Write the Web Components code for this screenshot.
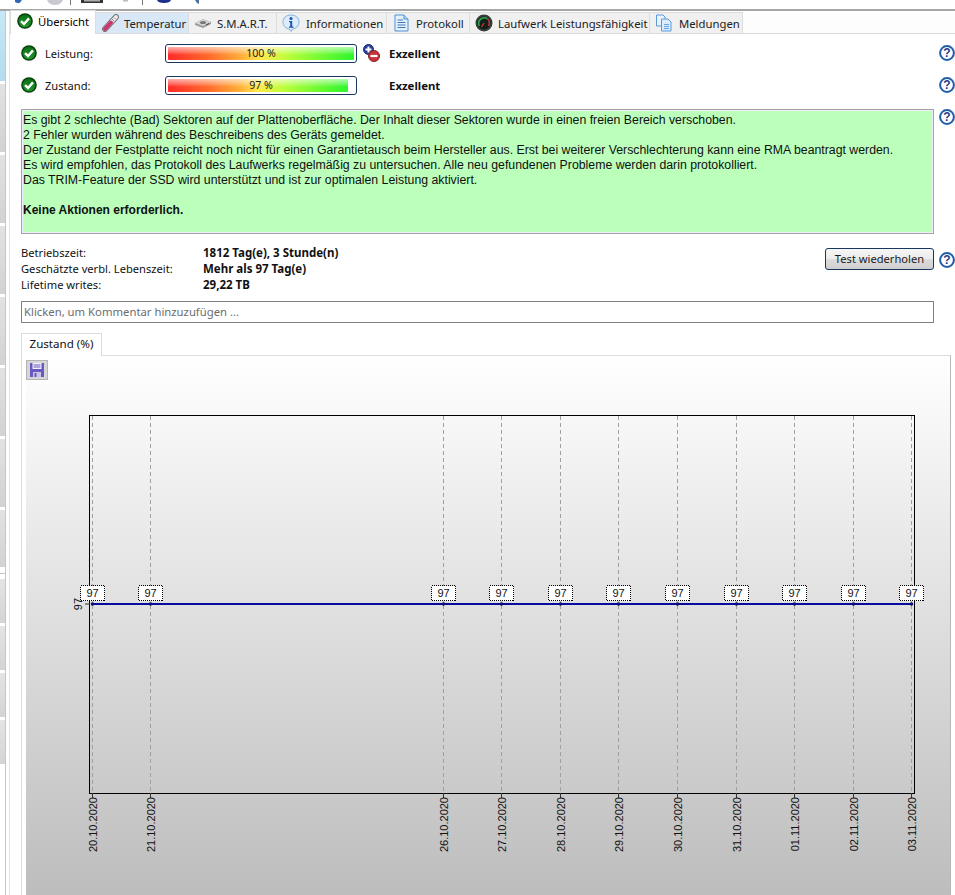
<!DOCTYPE html>
<html lang="de">
<head>
<meta charset="utf-8">
<title>Übersicht</title>
<style>
  html, body { margin: 0; height: 895px; overflow: hidden; background: #fff; }
  body { font: 11.15px "Noto Sans", sans-serif; color: #111; }
</style>
</head>
<body>
<hd-app></hd-app>
<script>
const ICONS = {
  check: `<svg viewBox="0 0 16 16" width="16" height="16"><defs><linearGradient id="g" x1="0" y1="0" x2="0" y2="1"><stop offset="0" stop-color="#0e6e18"/><stop offset="1" stop-color="#1f9a2a"/></linearGradient></defs><circle cx="8" cy="8" r="7.800" fill="#07420c"/><circle cx="8" cy="8" r="6.300" fill="url(#g)"/><path d="M4 8.200 7 11 12 5.400" fill="none" stroke="#fff" stroke-width="2.400"/></svg>`,
  thermo: `<svg viewBox="0 0 18 18" width="18" height="18"><path d="M4 15 15 3" stroke="#777" stroke-width="6" stroke-linecap="round"/><path d="M4 15 15 3" stroke="#eee" stroke-width="4" stroke-linecap="round"/><path d="M4 15 10 8.5" stroke="#c8356f" stroke-width="4" stroke-linecap="round"/><path d="M11 5 13 7M13 3.5 14.500 5" stroke="#888"/></svg>`,
  disk: `<svg viewBox="0 0 18 12" width="18" height="12"><path d="M1 6 9 2 17 5 17 7 9 11 1 8Z" fill="#9a9a9a"/><path d="M1 6 9 2 17 5 9 9Z" fill="#d4d4d4"/><ellipse cx="9" cy="5.500" rx="3" ry="1.500" fill="#777"/><path d="M12 8 15 6.500" stroke="#444"/></svg>`,
  info: `<svg viewBox="0 0 18 18" width="18" height="18"><path d="M9 1C4 1 1 4 1 8s3 6.500 6 7l2 2.500 1.500-2.500C14 14.500 17 12 17 8s-3-7-8-7Z" fill="#dcecfb" stroke="#7fb0e0"/><circle cx="9" cy="4.500" r="1.600" fill="#1d55b5"/><path d="M7 7h3.200v5.500H11.500v1.200H7v-1.200h1.200V8.200H7Z" fill="#1d55b5"/></svg>`,
  doc: `<svg viewBox="0 0 16 18" width="16" height="18"><path d="M2 1H11L15 5V17H2Z" fill="#e4f0fc" stroke="#4b93d8"/><path d="M11 1V5H15" fill="#bcd9f5" stroke="#4b93d8"/><path d="M4.500 6H10M4.500 8.500H12.500M4.500 11H12.500M4.500 13.500H12.500" stroke="#3c78c0"/></svg>`,
  gauge: `<svg viewBox="0 0 18 18" width="18" height="18"><circle cx="9" cy="9" r="8.500" fill="#3b3b3b"/><circle cx="9" cy="9" r="6.500" fill="#10201a"/><path d="M4.500 12A5.500 5.500 0 0 1 12 4.500" fill="none" stroke="#2fae4f" stroke-width="1.500"/><path d="M12 4.500A5.500 5.500 0 0 1 13.500 12" fill="none" stroke="#c33" stroke-width="1.500"/><path d="M9 9 6.500 13" stroke="#e33" stroke-width="1.200"/></svg>`,
  docs: `<svg viewBox="0 0 18 18" width="18" height="18"><path d="M1.500 1H8L10 3V12H1.500Z" fill="#eaf3fc" stroke="#5a9bdc"/><path d="M6.500 5H13L16 8V17H6.500Z" fill="#dcebfa" stroke="#5a9bdc"/><path d="M9 10.500H14M9 12.500H14M9 14.500H14" stroke="#66a3e0"/></svg>`,
  plusminus: `<svg viewBox="0 0 17 18" width="17" height="18"><circle cx="5.500" cy="5.500" r="5" fill="#2a3f9c" stroke="#1b2a70"/><path d="M2.500 5.500H8.500M5.500 2.500V8.500" stroke="#fff" stroke-width="2"/><circle cx="11" cy="12" r="5.500" fill="#c8323a" stroke="#8d1f26"/><path d="M7.500 12H14.500" stroke="#fff" stroke-width="2.200"/></svg>`,
  help: `<svg viewBox="0 0 16 16" width="16" height="16"><circle cx="8" cy="8" r="6.900" fill="#fff" stroke="#1f5fa8" stroke-width="2"/><text x="8" y="12.300" text-anchor="middle" font-family="Liberation Sans, sans-serif" font-weight="700" font-size="12" fill="#1b3f8c">?</text></svg>`,
  save: `<svg viewBox="0 0 14 14" width="14" height="14"><path d="M0 0H14V14H0Z" fill="#6a58c0"/><path d="M2.500 0H11.500V6H2.500Z" fill="#f2f0fa"/><path d="M3.500 2H10.500M3.500 4H10.500" stroke="#6a58c0"/><path d="M3 9H11V14H3Z" fill="#c9c4e8"/><path d="M4.500 10H6.500V14H4.500Z" fill="#6a58c0"/></svg>`
};

class HdIcon extends HTMLElement {
  connectedCallback() {
    if (!this.shadowRoot) this.attachShadow({ mode: "open" });
    this.shadowRoot.innerHTML = `
      <style>:host { display: inline-flex; align-items: center; justify-content: center; flex: none; } svg { display: block; }</style>
      ${ICONS[this.getAttribute("name")] || ""}`;
  }
}

// oben abgeschnittene Werkzeugleiste
class HdToolbar extends HTMLElement {
  constructor() {
    super();
    this.attachShadow({ mode: "open" });
    this.shadowRoot.innerHTML = `
      <style>
        :host { display: block; height: 9px; border-bottom: 2px solid #a6a6a6; background: #fff; overflow: hidden; }
        svg { display: block; }
      </style>
      <svg width="955" height="9" viewBox="0 0 955 9">
        <path d="M15 0H22L20 2.500Q18 4 15 2Z" fill="#2f66b4"/>
        <path d="M47 0H63Q61 5 55 5Q49 5 47 0Z" fill="#c9c9d2"/>
        <path d="M70.500 0V5M142.500 0V5" stroke="#777"/>
        <path d="M81 0H103V3H81Z" fill="#333"/><path d="M84 0H100V1.500H84Z" fill="#aaa"/>
        <path d="M123 0H128V1.500H123Z" fill="#bbb"/>
        <path d="M157 0H171Q170 3 164 3Q158 3 157 0Z" fill="#1c2f8c"/>
        <path d="M195 0H199V4L197 3Z" fill="#4a6f9c"/>
      </svg>`;
  }
}

class HdSideStrip extends HTMLElement {
  constructor() {
    super();
    this.attachShadow({ mode: "open" });
    this.shadowRoot.innerHTML = `
      <style>
        :host { display: flex; flex-direction: column; width: 10px; box-sizing: border-box; border-right: 1px solid #e2e2e2; height: 884px; flex: none; }
        .bar { width: 6px; box-sizing: border-box; border-right: 1px solid #c6c6c6; height: 100%; display: flex; flex-direction: column; gap: 3px; }
        .b { height: 68px; background: linear-gradient(#e2e2e2, #d2d2d2); }
        .b.on { height: 70px; background: linear-gradient(#c6e8f6, #b4dcec); }
        .s { height: 44px; background: linear-gradient(#e4e4e4, #d4d4d4); }
        .line { border-top: 1px solid #c6c6c6; margin-top: 3px; height: 2px; }
      </style>
      <div class="bar">
        <div class="b on"></div>
        <div class="b"></div>
        <div class="b"></div>
        <div class="b"></div>
        <div class="b"></div>
        <div class="b"></div>
        <div class="b"></div>
        <div class="b" style="height:57px"></div>
        <div class="line"></div>
        <div class="s"></div>
        <div class="s"></div>
        <div class="s"></div>
        <div class="s"></div>
      </div>`;
  }
}

class HdTabs extends HTMLElement {
  constructor() {
    super();
    this.attachShadow({ mode: "open" });
    this.shadowRoot.innerHTML = `
      <style>
        :host { display: flex; height: 23px; box-sizing: border-box; background: #fdfdfd; border-bottom: 1px solid #d9d9d9; align-items: flex-end; }
      </style>
      <slot></slot>`;
  }
}

class HdTab extends HTMLElement {
  constructor() {
    super();
    this.attachShadow({ mode: "open" });
    this.shadowRoot.innerHTML = `
      <style>
        :host { display: flex; align-items: center; gap: 5px; box-sizing: border-box; height: 22px; margin-bottom: -1px; padding: 0 0 0 5px; font-size: 11.3px;
                background: #f0f0f0; border: 1px solid #dcdcdc; border-left: 0; color: #222; white-space: nowrap; overflow: hidden; }
        :host([active]) { background: #fff; height: 24px; border-left: 1px solid #dcdcdc; border-bottom: 0; color: #000; margin-top: -2px; padding-bottom: 3px; padding-left: 6px; }
        :host([hover]) { background: #d9e8f6; }
      </style>
      <hd-icon name="${this.getAttribute("icon")}"></hd-icon><slot></slot>`;
    this.style.width = this.getAttribute("w") + "px";
    if (this.hasAttribute("pad")) this.style.paddingLeft = this.getAttribute("pad") + "px";
    if (this.hasAttribute("gap")) this.style.gap = this.getAttribute("gap") + "px";
  }
}

class HdBar extends HTMLElement {
  constructor() {
    super();
    this.attachShadow({ mode: "open" });
    const value = Number(this.getAttribute("value"));
    this.shadowRoot.innerHTML = `
      <style>
        :host { display: block; position: relative; width: 192px; height: 19px; box-sizing: border-box; border: 1px solid #17375e; border-radius: 3px; background: #fff; padding: 2px; }
        .fill { height: 100%; border-radius: 1px;
          background:
            linear-gradient(rgba(255,255,255,.62), rgba(255,255,255,.2) 45%, rgba(255,255,255,0) 60%),
            linear-gradient(90deg, #ff2a2a, #ff6a2a 22%, #ffb03a 40%, #ffe94a 50%, #b8ff3a 65%, #2cf52c 100%); }
        span { position: absolute; inset: 0; display: flex; align-items: center; justify-content: center; font-size: 10.6px; color: #222; }
      </style>
      <div class="fill" style="width:${value === 100 ? 100 : 96.8}%"></div>
      <span>${value} %</span>`;
  }
}

class HdStatus extends HTMLElement {
  constructor() {
    super();
    this.attachShadow({ mode: "open" });
    const trend = this.hasAttribute("trend") ? `<hd-icon name="plusminus"></hd-icon>` : "";
    this.shadowRoot.innerHTML = `
      <style>
        :host { display: grid; grid-template-columns: 16px 128px 192px 32px 1fr 16px; align-items: center; height: 32px; }
        .label { padding-left: 8px; }
        .trend { padding-left: 6px; display: flex; }
        .result { font-weight: 700; font-size: 11.4px; }
      </style>
      <hd-icon name="check"></hd-icon>
      <div class="label">${this.getAttribute("label")}</div>
      <hd-bar value="${this.getAttribute("value")}"></hd-bar>
      <div class="trend">${trend}</div>
      <div class="result"><slot></slot></div>
      <hd-icon name="help"></hd-icon>`;
  }
}

class HdMessage extends HTMLElement {
  constructor() {
    super();
    this.attachShadow({ mode: "open" });
    this.shadowRoot.innerHTML = `
      <style>
        :host { display: grid; grid-template-columns: 913px 16px; column-gap: 5px; align-items: start; margin-top: 8px; }
        .box { box-sizing: border-box; height: 125px; padding: 3px 1px; background: #bbffbb; border: 1px solid #a3a3a3; box-shadow: inset 0 0 0 1px #eef;
               font: 12.3px/15px "Liberation Sans", Arial, sans-serif; color: #101010; white-space: pre-line; }
        ::slotted(b) { font-size: 12px; }
      </style>
      <div class="box"><slot></slot></div>
      <hd-icon name="help"></hd-icon>`;
  }
}

class HdStats extends HTMLElement {
  constructor() {
    super();
    this.attachShadow({ mode: "open" });
    this.shadowRoot.innerHTML = `
      <style>
        :host { display: grid; grid-template-columns: 182px 622px 109px 21px; margin-top: 11px; height: 48px; line-height: 16px; }
        .k { grid-column: 1; }
        .v { grid-column: 2; font-weight: 700; font-size: 11.5px; }
        button { grid-column: 3; grid-row: 1 / span 2; margin-top: 3px; height: 22px; width: 109px; padding: 0; font: inherit; color: #1a1a1a; border: 1px solid #17375e; border-radius: 3px;
                 background: linear-gradient(#f6f6f6, #ececec 48%, #dcdcdc 52%, #cfcfcf); }
        hd-icon { grid-column: 4; grid-row: 1 / span 2; align-self: start; justify-self: end; margin-top: 7px; }
      </style>
      <div class="k">Betriebszeit:</div><div class="v">1812 Tag(e), 3 Stunde(n)</div>
      <div class="k">Geschätzte verbl. Lebenszeit:</div><div class="v">Mehr als 97 Tag(e)</div>
      <div class="k">Lifetime writes:</div><div class="v">29,22 TB</div>
      <button>Test wiederholen</button>
      <hd-icon name="help"></hd-icon>`;
  }
}

class HdComment extends HTMLElement {
  constructor() {
    super();
    this.attachShadow({ mode: "open" });
    this.shadowRoot.innerHTML = `
      <style>
        :host { display: flex; align-items: center; box-sizing: border-box; width: 913px; height: 22px; margin-top: 8px; padding: 0 0 2px 2px; border: 1px solid #808080; color: #6d6d6d; font-size: 11.3px; }
      </style>
      <slot></slot>`;
  }
}

class HdChart extends HTMLElement {
  constructor() {
    super();
    this.attachShadow({ mode: "open" });
    const points = [
      [92.5, "20.10.2020"], [150.5, "21.10.2020"], [443.5, "26.10.2020"], [501.5, "27.10.2020"],
      [560.5, "28.10.2020"], [618.5, "29.10.2020"], [677.5, "30.10.2020"], [736.5, "31.10.2020"],
      [794.5, "01.11.2020"], [853.5, "02.11.2020"], [911.5, "03.11.2020"]
    ];
    const lineY = 604;
    const font = `font-family="Liberation Sans, Arial, sans-serif" font-size="11"`;
    const marks = points.map(([x, date]) => `
      <path d="M${x} 416V793" stroke="#a0a0a0" stroke-dasharray="4 3"/>
      <path d="M${x} 793V798" stroke="#333"/>
      <text transform="translate(${x + 4} 797) rotate(-90)" text-anchor="end" ${font} fill="#111">${date}</text>`).join("");
    const labels = points.map(([x]) => `
      <circle cx="${x}" cy="${lineY}" r="1.800" fill="#10106a"/>
      <rect x="${x - 12}" y="585.500" width="24" height="15" fill="#fff" stroke="#000" stroke-dasharray="1 1" shape-rendering="crispEdges"/>
      <text x="${x}" y="597" text-anchor="middle" ${font} fill="#111">97</text>`).join("");
    this.shadowRoot.innerHTML = `
      <style>
        :host { display: block; position: relative; height: 539px; background: linear-gradient(#fff, #bdbdbd); }
        svg { display: block; }
        .save { position: absolute; left: 0; top: 4px; width: 22px; height: 20px; box-sizing: border-box; display: flex; align-items: center; justify-content: center; background: #d6d6d6; border: 1px solid #b4b4b4; }
      </style>
      <svg width="924" height="539" viewBox="26 356 924 539">
        <rect x="89.500" y="415.500" width="825" height="378" fill="none" stroke="#000"/>
        ${marks}
        <path d="M85 ${lineY}H90" stroke="#333"/>
        <text transform="translate(82 ${lineY}) rotate(-90)" text-anchor="middle" ${font} fill="#111">97</text>
        <path d="M92 ${lineY}H911.500" stroke="#0a0aa0" stroke-width="2"/>
        ${labels}
      </svg>
      <div class="save"><hd-icon name="save"></hd-icon></div>`;
  }
}

class HdChartPane extends HTMLElement {
  constructor() {
    super();
    this.attachShadow({ mode: "open" });
    this.shadowRoot.innerHTML = `
      <style>
        :host { display: block; margin-top: 10px; width: 930px; }
        .tab { box-sizing: border-box; width: 81px; height: 23px; margin-bottom: -1px; padding-bottom: 3px; position: relative; z-index: 1; display: flex; align-items: center; justify-content: center; background: #fff; border: 1px solid #dcdcdc; border-bottom: 0; font-size: 11.6px; }
        .pane { border: 1px solid #dcdcdc; border-width: 1px 1px 0 1px; padding-left: 4px; border-right-color: #b8b8b8; }
      </style>
      <div class="tab"><slot></slot></div>
      <div class="pane"><hd-chart></hd-chart></div>`;
  }
}

class HdApp extends HTMLElement {
  constructor() {
    super();
    this.attachShadow({ mode: "open" });
    this.shadowRoot.innerHTML = `
      <style>
        :host { display: block; height: 895px; overflow: hidden; }
        .body { display: flex; }
        .main { flex: 1; min-width: 0; }
        .content { padding: 3px 0 0 11px; }
        hd-tab { flex: none; }
      </style>
      <hd-toolbar></hd-toolbar>
      <div class="body">
        <hd-side-strip></hd-side-strip>
        <div class="main">
          <hd-tabs>
            <hd-tab icon="check" w="86" active>Übersicht</hd-tab>
            <hd-tab icon="thermo" w="93" hover>Temperatur</hd-tab>
            <hd-tab icon="disk" w="88">S.M.A.R.T.</hd-tab>
            <hd-tab icon="info" w="110" gap="6">Informationen</hd-tab>
            <hd-tab icon="doc" w="83" pad="6" gap="7">Protokoll</hd-tab>
            <hd-tab icon="gauge" w="180">Laufwerk Leistungsfähigkeit</hd-tab>
            <hd-tab icon="docs" w="93" gap="6">Meldungen</hd-tab>
          </hd-tabs>
          <div class="content">
            <hd-status label="Leistung:" value="100" trend>Exzellent</hd-status>
            <hd-status label="Zustand:" value="97">Exzellent</hd-status>
            <hd-message>Es gibt 2 schlechte (Bad) Sektoren auf der Plattenoberfläche. Der Inhalt dieser Sektoren wurde in einen freien Bereich verschoben.
2 Fehler wurden während des Beschreibens des Geräts gemeldet.
Der Zustand der Festplatte reicht noch nicht für einen Garantietausch beim Hersteller aus. Erst bei weiterer Verschlechterung kann eine RMA beantragt werden.
Es wird empfohlen, das Protokoll des Laufwerks regelmäßig zu untersuchen. Alle neu gefundenen Probleme werden darin protokolliert.
Das TRIM-Feature der SSD wird unterstützt und ist zur optimalen Leistung aktiviert.

<b>Keine Aktionen erforderlich.</b></hd-message>
            <hd-stats></hd-stats>
            <hd-comment>Klicken, um Kommentar hinzuzufügen ...</hd-comment>
            <hd-chart-pane>Zustand (%)</hd-chart-pane>
          </div>
        </div>
      </div>`;
  }
}

customElements.define("hd-icon", HdIcon);
customElements.define("hd-toolbar", HdToolbar);
customElements.define("hd-side-strip", HdSideStrip);
customElements.define("hd-tabs", HdTabs);
customElements.define("hd-tab", HdTab);
customElements.define("hd-bar", HdBar);
customElements.define("hd-status", HdStatus);
customElements.define("hd-message", HdMessage);
customElements.define("hd-stats", HdStats);
customElements.define("hd-comment", HdComment);
customElements.define("hd-chart", HdChart);
customElements.define("hd-chart-pane", HdChartPane);
customElements.define("hd-app", HdApp);
</script>
</body>
</html>
